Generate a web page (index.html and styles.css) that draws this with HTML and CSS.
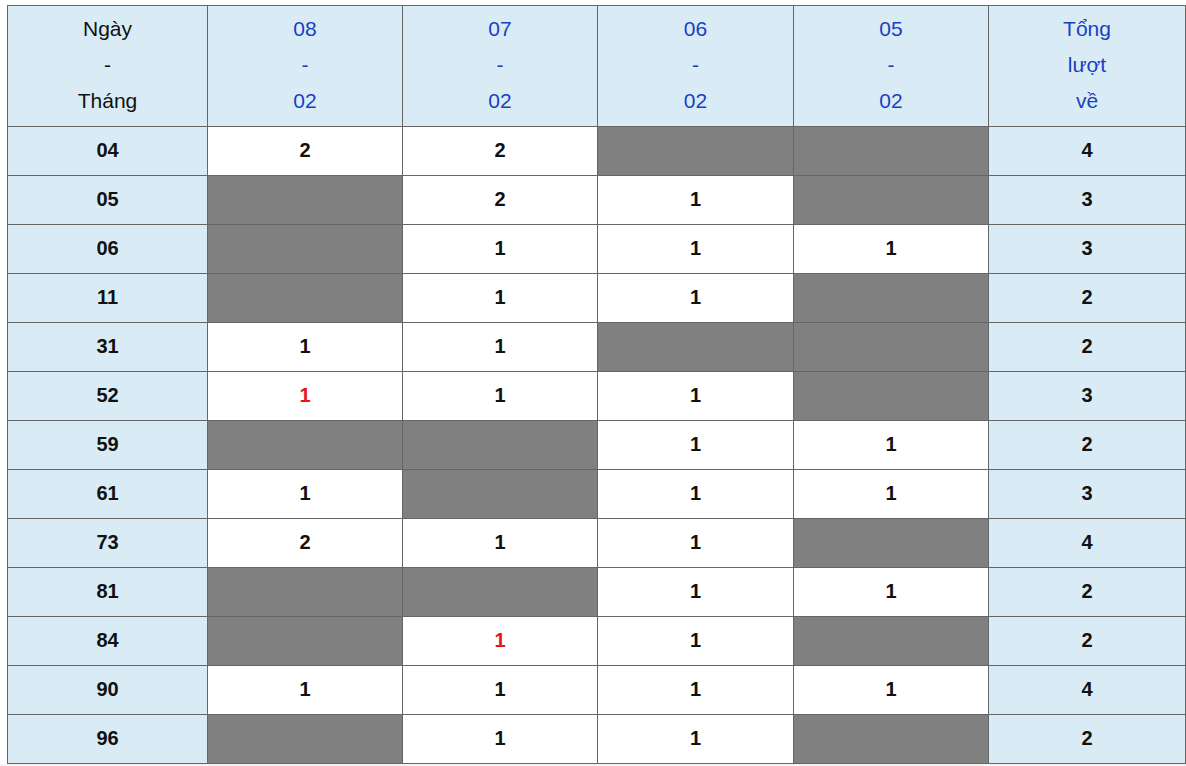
FILE: index.html
```html
<!DOCTYPE html>
<html lang="vi">
<head>
<meta charset="utf-8">
<title>Thống kê</title>
<link rel="stylesheet" href="styles.css">
</head>
<body>
<table class="stats">
  <colgroup>
    <col class="c-first">
    <col class="c-195">
    <col class="c-195">
    <col class="c-196">
    <col class="c-195">
    <col class="c-last">
  </colgroup>
  <thead>
    <tr>
      <th class="h-label">Ngày<br>-<br>Tháng</th>
      <th class="h-date">08<br>-<br>02</th>
      <th class="h-date">07<br>-<br>02</th>
      <th class="h-date">06<br>-<br>02</th>
      <th class="h-date">05<br>-<br>02</th>
      <th class="h-date">Tổng<br>lượt<br>về</th>
    </tr>
  </thead>
  <tbody>
    <tr><td class="num">04</td><td>2</td><td>2</td><td class="off"></td><td class="off"></td><td class="sum">4</td></tr>
    <tr><td class="num">05</td><td class="off"></td><td>2</td><td>1</td><td class="off"></td><td class="sum">3</td></tr>
    <tr><td class="num">06</td><td class="off"></td><td>1</td><td>1</td><td>1</td><td class="sum">3</td></tr>
    <tr><td class="num">11</td><td class="off"></td><td>1</td><td>1</td><td class="off"></td><td class="sum">2</td></tr>
    <tr><td class="num">31</td><td>1</td><td>1</td><td class="off"></td><td class="off"></td><td class="sum">2</td></tr>
    <tr><td class="num">52</td><td class="red">1</td><td>1</td><td>1</td><td class="off"></td><td class="sum">3</td></tr>
    <tr><td class="num">59</td><td class="off"></td><td class="off"></td><td>1</td><td>1</td><td class="sum">2</td></tr>
    <tr><td class="num">61</td><td>1</td><td class="off"></td><td>1</td><td>1</td><td class="sum">3</td></tr>
    <tr><td class="num">73</td><td>2</td><td>1</td><td>1</td><td class="off"></td><td class="sum">4</td></tr>
    <tr><td class="num">81</td><td class="off"></td><td class="off"></td><td>1</td><td>1</td><td class="sum">2</td></tr>
    <tr><td class="num">84</td><td class="off"></td><td class="red">1</td><td>1</td><td class="off"></td><td class="sum">2</td></tr>
    <tr><td class="num">90</td><td>1</td><td>1</td><td>1</td><td>1</td><td class="sum">4</td></tr>
    <tr><td class="num">96</td><td class="off"></td><td>1</td><td>1</td><td class="off"></td><td class="sum">2</td></tr>
  </tbody>
</table>
<div class="below"></div>
</body>
</html>
```
FILE: styles.css
```css
html, body {
  margin: 0;
  padding: 0;
  background: #ffffff;
}
body {
  padding: 5px 0 0 7px;
  font-family: "Liberation Sans", Arial, sans-serif;
}
.stats {
  border-collapse: collapse;
  table-layout: fixed;
  width: 1178px;
  border: 1px solid #666666;
}
.c-first { width: 200px; }
.c-195 { width: 195px; }
.c-196 { width: 196px; }
.c-last { width: 197px; }
.stats th,
.stats td {
  border: 1px solid #666666;
  text-align: center;
  padding: 0;
}
.stats th {
  background: #d9ecf5;
  font-weight: normal;
  font-size: 21px;
  line-height: 36px;
  height: 121px;
  padding-bottom: 2px;
  box-sizing: border-box;
}
.h-label { color: #111111; }
.h-date { color: #1a3fc4; }
.stats td {
  height: 49px;
  padding-bottom: 2px;
  box-sizing: border-box;
  font-size: 20px;
  font-weight: bold;
  color: #111111;
  background: #ffffff;
}
.stats td.num,
.stats td.sum {
  background: #d9ecf5;
}
.stats td.off {
  background: #808080;
}
.stats td.red {
  color: #e8141b;
}
.below {
  height: 2px;
  background: #f3f3f3;
  margin-left: -7px;
}
```
